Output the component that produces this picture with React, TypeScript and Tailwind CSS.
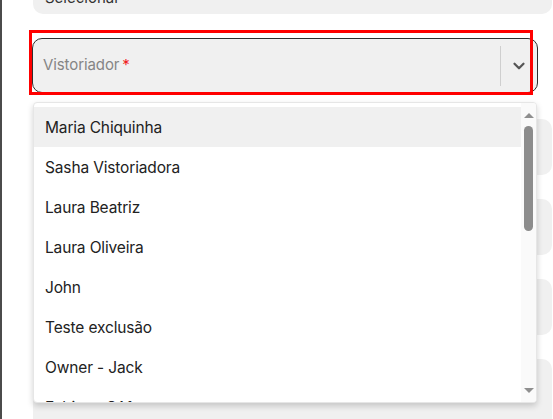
import { ChevronDown } from 'lucide-react';

const options = [
    'Maria Chiquinha',
    'Sasha Vistoriadora',
    'Laura Beatriz',
    'Laura Oliveira',
    'John',
    'Teste exclusão',
    'Owner - Jack',
    'Fabiana CA1',
];

export default function App() {
    return (
        <div className="flex h-[419px] w-[553px] overflow-hidden bg-white font-['Inter',sans-serif]">
            {/* page edge */}
            <div className="w-[2px] shrink-0 bg-[#4b4b4b]" />

            <div className="relative flex flex-1 flex-col pl-[31px] pr-px">
                {/* previous field, scrolled off the top */}
                <div className="-mt-[42px] h-[56px] shrink-0 rounded-[10px] bg-[#f0f0f0] pl-3 pt-[30px] text-[15px] leading-5 text-[#333]">
                    Selecionar
                </div>

                {/* Vistoriador select (focused) */}
                <div className="-ml-px mr-[14px] mt-6 flex h-[55px] shrink-0 items-center rounded-[10px] border border-[#2e2e2e] bg-[#f0f0f0]">
                    <span className="flex-1 pl-[10px] text-[15px] tracking-[-0.1px] text-[#858585]">
                        Vistoriador<span className="ml-[3px] text-[#f01e1e]">*</span>
                    </span>
                    <div className="h-[40px] w-px bg-[#cfcfcf]" />
                    <div className="flex w-[36px] items-center justify-center text-[#555]">
                        <ChevronDown size={18} strokeWidth={3} />
                    </div>
                </div>

                {/* fields behind the menu */}
                <div className="mt-[26px] flex flex-col gap-6">
                    <div className="h-[56px] rounded-[10px] bg-[#f0f0f0]" />
                    <div className="h-[56px] rounded-[10px] bg-[#f0f0f0]" />
                    <div className="h-[56px] rounded-[10px] bg-[#f0f0f0]" />
                    <div className="h-[80px] rounded-[10px] bg-[#f0f0f0]" />
                </div>

                {/* annotation box */}
                <div className="pointer-events-none absolute left-[27px] top-[30px] h-[65px] w-[504px] border-[3px] border-[#ff0000]" />

                {/* dropdown menu */}
                <div className="absolute left-[31px] top-[102px] flex h-[301px] w-[504px] overflow-hidden rounded-[4px] border border-[#e6e6e6] bg-white shadow-[0_3px_6px_rgba(0,0,0,0.18)]">
                    <ul className="flex-1 pt-[4px]">
                        {options.map((name, i) => (
                            <li
                                key={name}
                                className={`flex h-[40px] items-center pl-[11px] pt-px text-[15.5px] tracking-[-0.15px] text-[#222] ${i === 0 ? 'bg-[#f0f0f0]' : ''}`}
                            >
                                {name}
                            </li>
                        ))}
                    </ul>
                    {/* scrollbar */}
                    <div className="flex w-[15px] flex-col items-center bg-[#fafafa] pt-[10px] pb-[9px]">
                        <div className="h-0 w-0 border-x-[5px] border-b-[5px] border-x-transparent border-b-[#8f8f8f]" />
                        <div className="mt-[8px] h-[105px] w-[9px] rounded-full bg-[#8c8c8c]" />
                        <div className="flex-1" />
                        <div className="h-0 w-0 border-x-[5px] border-t-[5px] border-x-transparent border-t-[#8f8f8f]" />
                    </div>
                </div>
            </div>
        </div>
    );
}
